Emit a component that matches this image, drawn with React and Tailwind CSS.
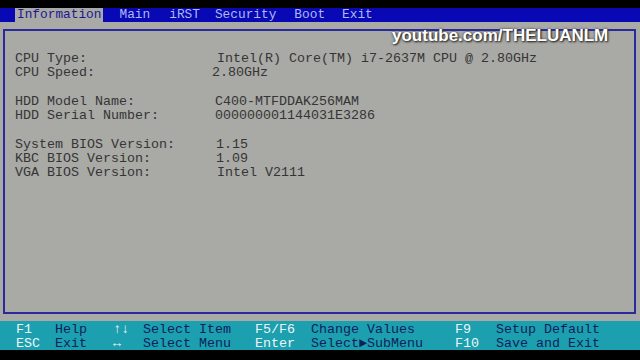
export default function App() {
  const rows = [
    ["CPU Type:", "Intel(R) Core(TM) i7-2637M CPU @ 2.80GHz", "ml-px"],
    ["CPU Speed:", "2.80GHz", "-ml-[4px]"],
    null,
    ["HDD Model Name:", "C400-MTFDDAK256MAM", "-ml-[1px]"],
    ["HDD Serial Number:", "000000001144031E3286", "-ml-[1px]"],
    null,
    ["System BIOS Version:", "1.15", ""],
    ["KBC BIOS Version:", "1.09", ""],
    ["VGA BIOS Version:", "Intel V2111", "ml-px"],
  ];
  const foot = [
    ["F1", "Help", "↑↓", "Select Item", "F5/F6", "Change Values", "F9", "Setup Default"],
    ["ESC", "Exit", "↔", "Select Menu", "Enter", "Select►SubMenu", "F10", "Save and Exit"],
  ];
  return (
    <div className="relative w-[640px] h-[360px] bg-black flex flex-col overflow-hidden font-['Liberation_Mono','DejaVu_Sans_Mono',monospace]">
      <div className="h-[8px] bg-black" />
      <div className="h-[14px] bg-[#0808b4] flex items-stretch text-[12.8px] leading-[14px] text-[#aebaf0]">
        <div className="ml-[15px] px-[2px] bg-[#a9a9a7] text-[#1a1a90] flex items-center">Information</div>
        <div className="ml-[16px] flex items-center">Main</div>
        <div className="ml-[19px] flex items-center">iRST</div>
        <div className="ml-[15px] flex items-center">Security</div>
        <div className="ml-[18px] flex items-center">Boot</div>
        <div className="ml-[17px] flex items-center">Exit</div>
      </div>
      <div className="h-[299px] bg-[#a9a9a5] pl-[3px] pr-[4px] pt-[7px] pb-[7px]">
        <div className="h-full border-2 border-[#2a2a9c] pl-[10px] pt-[21px] text-[13.33px] leading-[14.3px] text-[#353535]">
          {rows.map((r, i) =>
            r ? (
              <div key={i} className="flex h-[14.3px] whitespace-pre">
                <div className="w-[201px]">{r[0]}</div>
                <div className={r[2]}>{r[1]}</div>
              </div>
            ) : (
              <div key={i} className="h-[14.3px]" />
            )
          )}
        </div>
      </div>
      <div className="h-[29px] bg-[#1c9fae] pl-[16px] pt-[1.5px] text-[13.33px] leading-[14.5px]">
        {foot.map((f, i) => (
          <div key={i} className="flex h-[14.5px] whitespace-pre">
            <div className="w-[39px] text-[#eef6f6]">{f[0]}</div>
            <div className="w-[58px] text-[#0e1f5c]">{f[1]}</div>
            <div className="w-[30px] text-[#eef6f6]">{f[2]}</div>
            <div className="w-[112px] text-[#0e1f5c]">{f[3]}</div>
            <div className="w-[56px] text-[#eef6f6]">{f[4]}</div>
            <div className="w-[144px] text-[#0e1f5c]">{f[5]}</div>
            <div className="w-[41px] text-[#eef6f6]">{f[6]}</div>
            <div className="text-[#0e1f5c]">{f[7]}</div>
          </div>
        ))}
      </div>
      <div className="flex-1 bg-black" />
      <div className="absolute left-[392px] top-[26px] text-[17px] leading-[20px] font-bold text-white font-['Liberation_Sans',Arial,sans-serif] [text-shadow:1px_1px_2px_#222,0_0_3px_#444]">
        youtube.com/THELUANLM
      </div>
    </div>
  );
}
